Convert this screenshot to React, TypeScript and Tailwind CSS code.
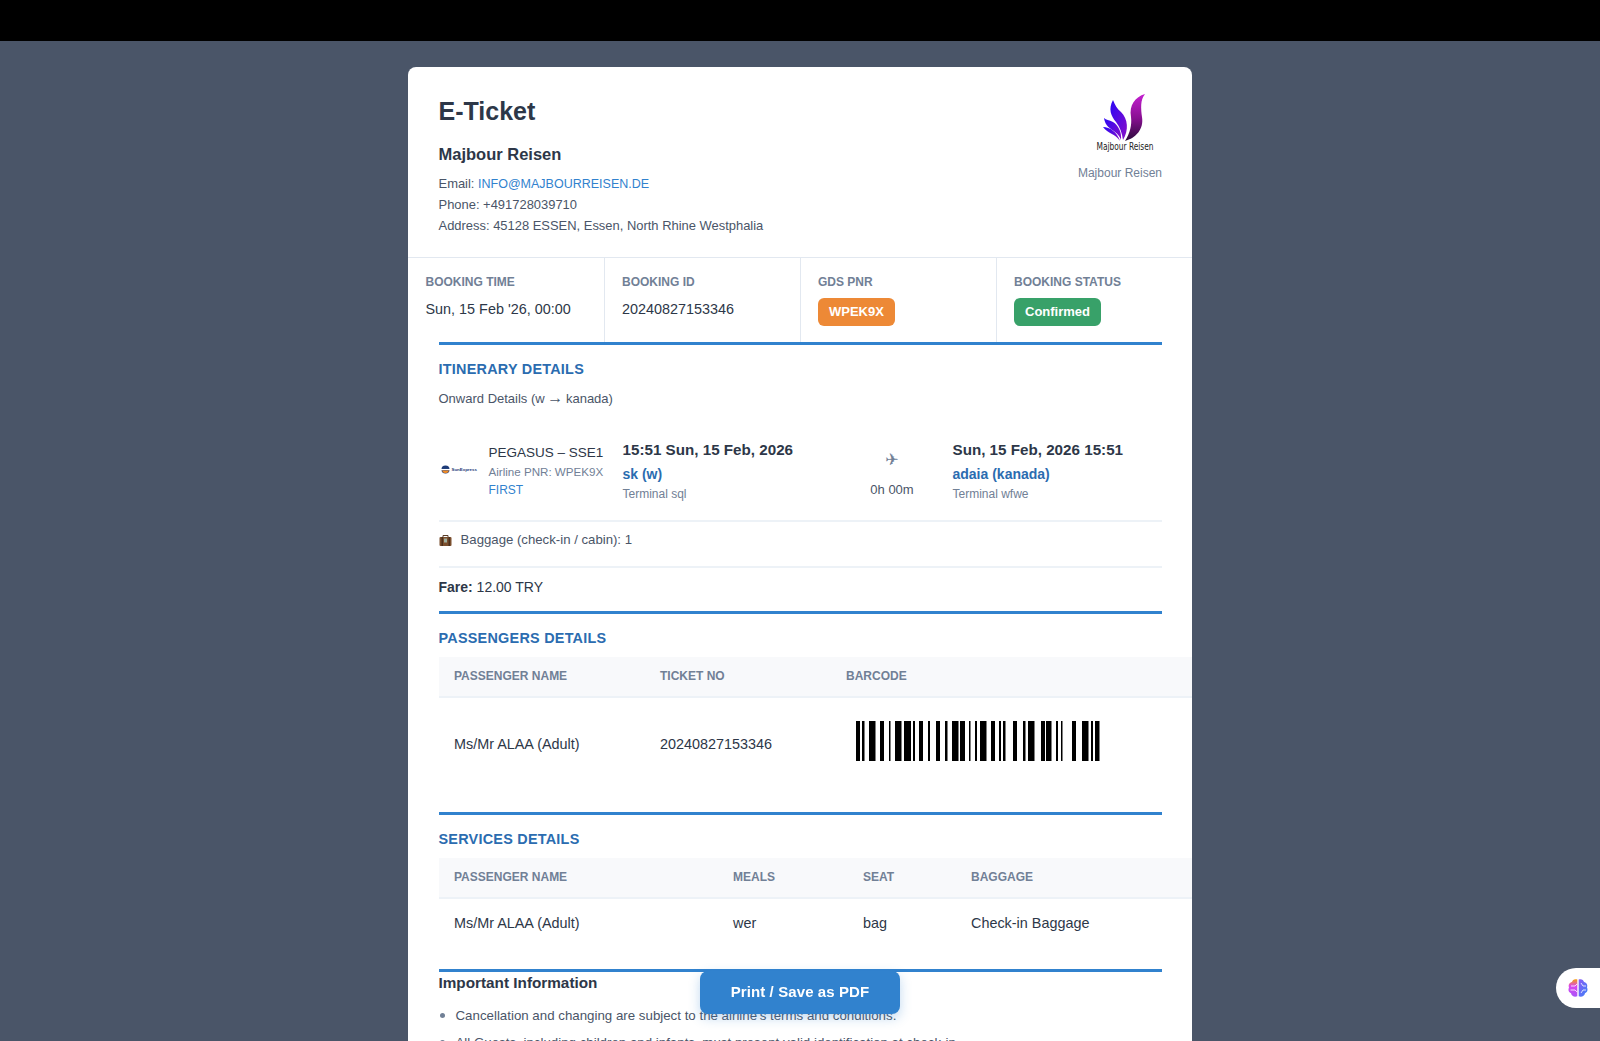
const bars: [number, number][] = [
  [0, 4], [6, 2.5], [13, 6.5], [24, 4], [33, 1.5], [39, 6.5], [48, 7], [57, 2], [63, 4], [72, 2], [80, 4], [89, 2.5],
  [96, 6.5], [104, 5], [113, 1.5], [119, 2], [124, 6.5], [135, 4], [143, 2], [147, 2.5], [157, 4], [167, 2.5],
  [172, 6.5], [185, 4], [190, 5.5], [200, 2], [205, 1.5], [216, 4], [226, 6.5], [235, 2], [239, 4.5],
]

function Logo() {
  return (
    <svg width="90" height="70" viewBox="0 0 90 70" className="block">
      <defs>
        <linearGradient id="petal" x1="0" y1="0" x2="0" y2="1">
          <stop offset="0" stopColor="#c41fd0" />
          <stop offset="0.5" stopColor="#8a1093" />
          <stop offset="1" stopColor="#2a0a3a" />
        </linearGradient>
        <linearGradient id="blue" x1="0" y1="0" x2="1" y2="1">
          <stop offset="0" stopColor="#2a06f5" />
          <stop offset="1" stopColor="#8a10c8" />
        </linearGradient>
      </defs>
      <path d="M75 9C65 12 59 20 61 32C62 40 60 48 55 56C66 53 74 44 72 32C71 24 70 15 75 9Z" fill="url(#petal)" />
      <path d="M43 15C38 24 41 31 46 37C50 42 52 48 53 55C59 45 58 34 51 27C47 24 45 20 43 15Z" fill="url(#blue)" />
      <path d="M34 33C35 41 41 44 45 47C48 49 50 52 51 55C52 47 48 40 43 37C39 35 36 35 34 33Z" fill="url(#blue)" />
      <path d="M33 42C38 49 45 48 50 56C47 47 40 42 33 42Z" fill="url(#blue)" />
      <text x="55" y="65" textAnchor="middle" textLength="57" lengthAdjust="spacingAndGlyphs" fontSize="10" fill="#222" fontFamily="'DejaVu Sans Condensed', 'Liberation Sans', sans-serif">
        Majbour Reisen
      </text>
    </svg>
  )
}

function StatCell({ label, children, first }: { label: string; children: React.ReactNode; first?: boolean }) {
  return (
    <div className={`w-[196px] h-[84px] pt-[15px] ${first ? 'pl-[17.5px]' : 'pl-[17px] border-l border-[#e2e8f0]'}`}>
      <div className="text-[12px] font-bold leading-[19px] uppercase text-[#718096]">{label}</div>
      {children}
    </div>
  )
}

function SectionTitle({ children, className }: { children: React.ReactNode; className: string }) {
  return (
    <h3 className={`text-[14.4px] font-bold uppercase text-[#2b6cb0] leading-[20px] tracking-[0.25px] ${className}`}>
      {children}
    </h3>
  )
}

function Th({ children, className }: { children?: React.ReactNode; className: string }) {
  return (
    <th className={`h-[40px] pl-[15.5px] text-left align-middle text-[12px] font-bold uppercase text-[#718096] bg-[#f8f9fb] border-b-2 border-[#edf2f7] ${className}`}>
      {children}
    </th>
  )
}

export default function App() {
  return (
    <div className="h-screen overflow-hidden bg-[#4a5568] font-['Liberation_Sans',Arial,sans-serif] text-[13.2px] leading-[20.8px] text-[#2d3748]">
      <div className="h-[41px] bg-black" />

      <div className="mx-auto mt-[26px] w-[784px] h-[1100px] overflow-hidden rounded-t-[8px] bg-white">
        {/* Header */}
        <div className="flex justify-between h-[191px] border-b border-[#e2e8f0] pl-[30.5px] pr-[30px]">
          <div className="pt-[29px]">
            <h1 className="text-[25px] font-bold leading-[30px]">E-Ticket</h1>
            <div className="mt-[16px] text-[16.5px] font-bold leading-[24px]">Majbour Reisen</div>
            <div className="mt-[8px] text-[#4a5568] text-[12.95px]">
              <div>
                Email: <span className="text-[12.5px] text-[#3182ce]">INFO@MAJBOURREISEN.DE</span>
              </div>
              <div>Phone: +491728039710</div>
              <div>Address: 45128 ESSEN, Essen, North Rhine Westphalia</div>
            </div>
          </div>
          <div className="flex flex-col items-end">
            <div className="mt-[18px] mr-[2px]">
              <Logo />
            </div>
            <div className="mt-[8px] text-[12px] text-[#718096]">Majbour Reisen</div>
          </div>
        </div>

        {/* Booking stats */}
        <div className="flex">
          <StatCell label="Booking Time" first>
            <div className="mt-[6px] text-[14.4px] leading-[22px]">Sun, 15 Feb '26, 00:00</div>
          </StatCell>
          <StatCell label="Booking ID">
            <div className="mt-[6px] text-[14.4px] leading-[22px]">20240827153346</div>
          </StatCell>
          <StatCell label="GDS PNR">
            <span className="mt-[6px] inline-block h-[28px] rounded-[6px] bg-[#ed8936] px-[11px] text-[13px] font-bold leading-[28px] text-white">
              WPEK9X
            </span>
          </StatCell>
          <StatCell label="Booking Status">
            <span className="mt-[6px] inline-block h-[28px] rounded-[6px] bg-[#38a169] px-[11px] text-[13px] font-bold leading-[28px] text-white">
              Confirmed
            </span>
          </StatCell>
        </div>

        <div className="pl-[30.5px]">
          {/* Itinerary */}
          <div className="w-[723px] border-t-[3px] border-[#3182ce]">
            <SectionTitle className="mt-[14px]">Itinerary Details</SectionTitle>
            <div className="mt-[10px] text-[#4a5568] text-[13px]">
              Onward Details (w <span className="mx-[-1px] text-[16px] leading-none">→</span> kanada)
            </div>

            <div className="mt-[29px] flex h-[83px] border-b-2 border-[#edf2f7]">
              <div className="mt-[24px] h-[14px] w-[50px] flex items-center gap-[2px]">
                <svg width="9" height="9" viewBox="0 0 10 10" className="ml-[2px]">
                  <circle cx="5" cy="5" r="4.5" fill="#1d3b78" />
                  <rect x="0" y="4.4" width="10" height="1.4" fill="#fff" />
                  <path d="M1 6.2h8a4.2 4.2 0 0 1-8 0Z" fill="#f08a24" />
                </svg>
                <span className="text-[4.4px] leading-none text-[#1d3b78] font-bold">SunExpress</span>
              </div>
              <div className="mt-[4px] w-[134px] whitespace-nowrap">
                <div className="text-[13.5px] leading-[20px]">PEGASUS – SSE1</div>
                <div className="text-[11.6px] leading-[18px] text-[#718096]">Airline PNR: WPEK9X</div>
                <div className="mt-[1px] text-[12px] leading-[17px] text-[#3182ce]">FIRST</div>
              </div>
              <div className="w-[220px] whitespace-nowrap">
                <div className="text-[15.2px] font-bold leading-[22px]">15:51 Sun, 15 Feb, 2026</div>
                <div className="mt-[2px] text-[14px] font-bold leading-[22px] text-[#2b6cb0]">sk (w)</div>
                <div className="text-[12px] leading-[18px] text-[#718096]">Terminal sql</div>
              </div>
              <div className="w-[99px] pt-[6px] flex flex-col items-center">
                <div className="font-['DejaVu_Sans',sans-serif] text-[16px] leading-[30px] text-[#718096]">✈</div>
                <div className="mt-[5px] text-[13px] leading-[20px] text-[#4a5568]">0h 00m</div>
              </div>
              <div className="ml-[11px] whitespace-nowrap">
                <div className="text-[15.2px] font-bold leading-[22px]">Sun, 15 Feb, 2026 15:51</div>
                <div className="mt-[2px] text-[14px] font-bold leading-[22px] text-[#2b6cb0]">adaia (kanada)</div>
                <div className="text-[12px] leading-[18px] text-[#718096]">Terminal wfwe</div>
              </div>
            </div>

            <div className="flex h-[46px] items-center gap-[9px] border-b-2 border-[#edf2f7] pb-[7px] text-[#4a5568]">
              <svg width="13" height="13" viewBox="0 0 13 13">
                <path d="M4 3V1.5h5V3" fill="none" stroke="#5a3d28" strokeWidth="1" />
                <rect x="0.5" y="3" width="12" height="9" rx="1" fill="#7a4f2e" />
                <rect x="2.5" y="3" width="1.5" height="9" fill="#4a2f1c" />
                <rect x="9.5" y="3" width="1.5" height="9" fill="#4a2f1c" />
                <rect x="5" y="4.5" width="3" height="4" fill="#9fb0a0" />
              </svg>
              <span className="text-[13.2px]">Baggage (check-in / cabin): 1</span>
            </div>

            <div className="mt-[9.5px] text-[14px] leading-[21px]">
              <b>Fare:</b> 12.00 TRY
            </div>
          </div>

          {/* Passengers */}
          <div className="mt-[13px] w-[723px] border-t-[3px] border-[#3182ce]">
            <SectionTitle className="mt-[14px]">Passengers Details</SectionTitle>
          </div>
          <table className="mt-[9px] w-[754px] table-fixed border-collapse">
            <thead>
              <tr>
                <Th className="w-[206px]">Passenger Name</Th>
                <Th className="w-[186px]">Ticket No</Th>
                <Th className="">Barcode</Th>
              </tr>
            </thead>
            <tbody>
              <tr className="h-[115px] text-[14.4px]">
                <td className="pl-[15.5px] pb-[21px]">Ms/Mr ALAA (Adult)</td>
                <td className="pl-[15.5px] pb-[21px]">20240827153346</td>
                <td className="pl-[25.5px] pb-[29px]">
                  <svg width="244" height="40" viewBox="0 0 244 40" className="block">
                    {bars.map(([x, w]) => (
                      <rect key={x} x={x} y="0" width={w} height="40" fill="#000" />
                    ))}
                  </svg>
                </td>
              </tr>
            </tbody>
          </table>

          {/* Services */}
          <div className="w-[723px] border-t-[3px] border-[#3182ce]">
            <SectionTitle className="mt-[14px]">Services Details</SectionTitle>
          </div>
          <table className="mt-[9px] w-[754px] table-fixed border-collapse">
            <thead>
              <tr>
                <Th className="w-[279px]">Passenger Name</Th>
                <Th className="w-[130px]">Meals</Th>
                <Th className="w-[108px]">Seat</Th>
                <Th className="">Baggage</Th>
              </tr>
            </thead>
            <tbody>
              <tr className="h-[50px] text-[14.4px]">
                <td className="pl-[15.5px]">Ms/Mr ALAA (Adult)</td>
                <td className="pl-[15.5px]">wer</td>
                <td className="pl-[15.5px]">bag</td>
                <td className="pl-[15.5px]">Check-in Baggage</td>
              </tr>
            </tbody>
          </table>

          {/* Important info */}
          <div className="mt-[20.5px] w-[723px] border-t-[3px] border-[#3182ce]">
            <h4 className="text-[15.3px] font-bold leading-[22px]">Important Information</h4>
            <ul className="mt-[11px] list-disc pl-[17px] text-[13.3px] text-[#4a5568] marker:text-[#718096] marker:text-[16px]">
              <li className="mb-[5px]">Cancellation and changing are subject to the airline's terms and conditions.</li>
              <li>All Guests, including children and infants, must present valid identification at check-in.</li>
            </ul>
          </div>
        </div>
      </div>

      {/* Print button */}
      <button className="fixed left-[700px] top-[971px] h-[43px] w-[200px] rounded-[8px] bg-[#3182ce] text-[15px] font-bold text-white tracking-[0.1px] shadow-[0_4px_12px_rgba(49,130,206,0.3)]">
        Print / Save as PDF
      </button>

      {/* Assistant widget */}
      <div className="fixed right-0 top-[968px] flex h-[40px] w-[44px] items-center rounded-l-[20px] bg-white pl-[11px]">
        <svg width="22" height="22" viewBox="0 0 22 22">
          <defs>
            <linearGradient id="brainL" x1="0" y1="0" x2="0" y2="1">
              <stop offset="0" stopColor="#f59e0b" />
              <stop offset="0.4" stopColor="#d946ef" />
              <stop offset="1" stopColor="#a855f7" />
            </linearGradient>
            <linearGradient id="brainR" x1="0" y1="0" x2="1" y2="1">
              <stop offset="0" stopColor="#8b5cf6" />
              <stop offset="1" stopColor="#3b82f6" />
            </linearGradient>
          </defs>
          <path d="M10.3 2.5C7.5 1.5 5.5 3 5 5C2.5 5.5 1 8 2 10.5C0.8 12.8 1.8 15.5 4 16.2C4.5 19 7.5 20.5 10.3 19.3Z" fill="url(#brainL)" />
          <path d="M11.7 2.5C14.5 1.5 16.5 3 17 5C19.5 5.5 21 8 20 10.5C21.2 12.8 20.2 15.5 18 16.2C17.5 19 14.5 20.5 11.7 19.3Z" fill="url(#brainR)" />
          <path d="M4 9H8L10 7M3.5 13H8L10 15M14 6L16 9H19M14 16L16 13H19" fill="none" stroke="#fff" strokeWidth="0.8" />
        </svg>
      </div>
    </div>
  )
}
